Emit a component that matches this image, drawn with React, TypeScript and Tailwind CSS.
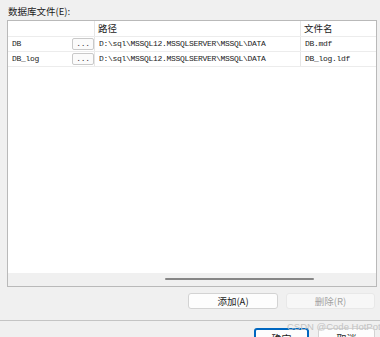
import React from "react";

const cjk = '"Noto Sans CJK SC", "Liberation Sans", sans-serif';
const mono = '"Liberation Mono", "Noto Sans CJK SC", monospace';

const rows = [
  { name: "DB", path: "D:\\sql\\MSSQL12.MSSQLSERVER\\MSSQL\\DATA", file: "DB.mdf" },
  { name: "DB_log", path: "D:\\sql\\MSSQL12.MSSQLSERVER\\MSSQL\\DATA", file: "DB_log.ldf" },
];

function BrowseButton() {
  return (
    <div className="w-[22px] h-[12px] rounded-[2px] border border-[#c9c9c9] bg-[#fbfbfb] flex items-center justify-center text-[8px] leading-none text-[#333] font-[Liberation_Mono,monospace]">
      ...
    </div>
  );
}

export default function App() {
  return (
    <div className="w-[380px] h-[337px] bg-[#f0f0f0] overflow-hidden relative flex flex-col text-[#1b1b1b]">
      <div className="h-[20px] shrink-0 pl-[8px] pt-[5px] text-[9.5px] leading-[12px]" style={{ fontFamily: cjk }}>
        数据库文件(E):
      </div>

      <div className="ml-[7px] w-[370px] h-[267px] shrink-0 border border-[#b9b9b9] bg-white flex flex-col">
        <div className="flex h-[15px] text-[9.5px] leading-[14px]" style={{ fontFamily: cjk }}>
          <div className="w-[87px] border-r border-[#e6e6e6]" />
          <div className="w-[206px] pl-[3px] border-r border-[#e6e6e6]">路径</div>
          <div className="flex-1 pl-[3px]">文件名</div>
        </div>
        {rows.map((r) => (
          <div
            key={r.name}
            className="flex h-[15px] border-t border-[#ececec] text-[8px] leading-[14px] tracking-[-0.3px]"
            style={{ fontFamily: mono }}
          >
            <div className="w-[64px] pl-[4px]">{r.name}</div>
            <div className="w-[23px] flex items-center border-r border-[#e6e6e6]">
              <BrowseButton />
            </div>
            <div className="w-[206px] pl-[4px] border-r border-[#e6e6e6] whitespace-nowrap overflow-hidden">{r.path}</div>
            <div className="flex-1 pl-[4px]">{r.file}</div>
          </div>
        ))}
        <div className="border-t border-[#ececec]" />
        <div className="flex-1" />
        <div className="h-[13px] bg-[#f0f0f0] pt-[5px]">
          <div className="ml-[157px] w-[149px] h-[2px] rounded-full bg-[#868686]" />
        </div>
      </div>

      <div className="flex shrink-0 mt-[6px] pl-[188px] gap-[8px] text-[9.5px]" style={{ fontFamily: cjk }}>
        <div className="w-[90px] h-[16px] rounded-[3px] border border-[#d3d3d3] bg-[#fdfdfd] flex items-center justify-center">
          添加(A)
        </div>
        <div className="w-[89px] h-[16px] rounded-[3px] border border-[#e8e8e8] bg-[#f7f7f7] text-[#a3a3a3] flex items-center justify-center">
          删除(R)
        </div>
      </div>

      <div className="mt-[11px] h-px shrink-0 bg-[#c4c4c4]" />

      <div className="flex mt-[7px] pl-[254px] gap-[9px] text-[10px] shrink-0" style={{ fontFamily: cjk }}>
        <div className="w-[55px] h-[22px] shrink-0 rounded-[3px] border-2 border-[#0067c0] bg-[#fdfdfd] flex justify-center pt-[3px] leading-[12px]">
          确定
        </div>
        <div className="w-[57px] h-[22px] shrink-0 rounded-[3px] border border-[#d3d3d3] bg-[#fdfdfd] flex justify-center pt-[4px] leading-[12px]">
          取消
        </div>
      </div>

      <div
        className="absolute left-[287px] top-[321px] whitespace-nowrap text-[9.5px] leading-[12px] text-[#c3c3c3]"
        style={{ fontFamily: '"Liberation Sans", sans-serif' }}
      >
        CSDN @Code HotPot
      </div>
    </div>
  );
}
